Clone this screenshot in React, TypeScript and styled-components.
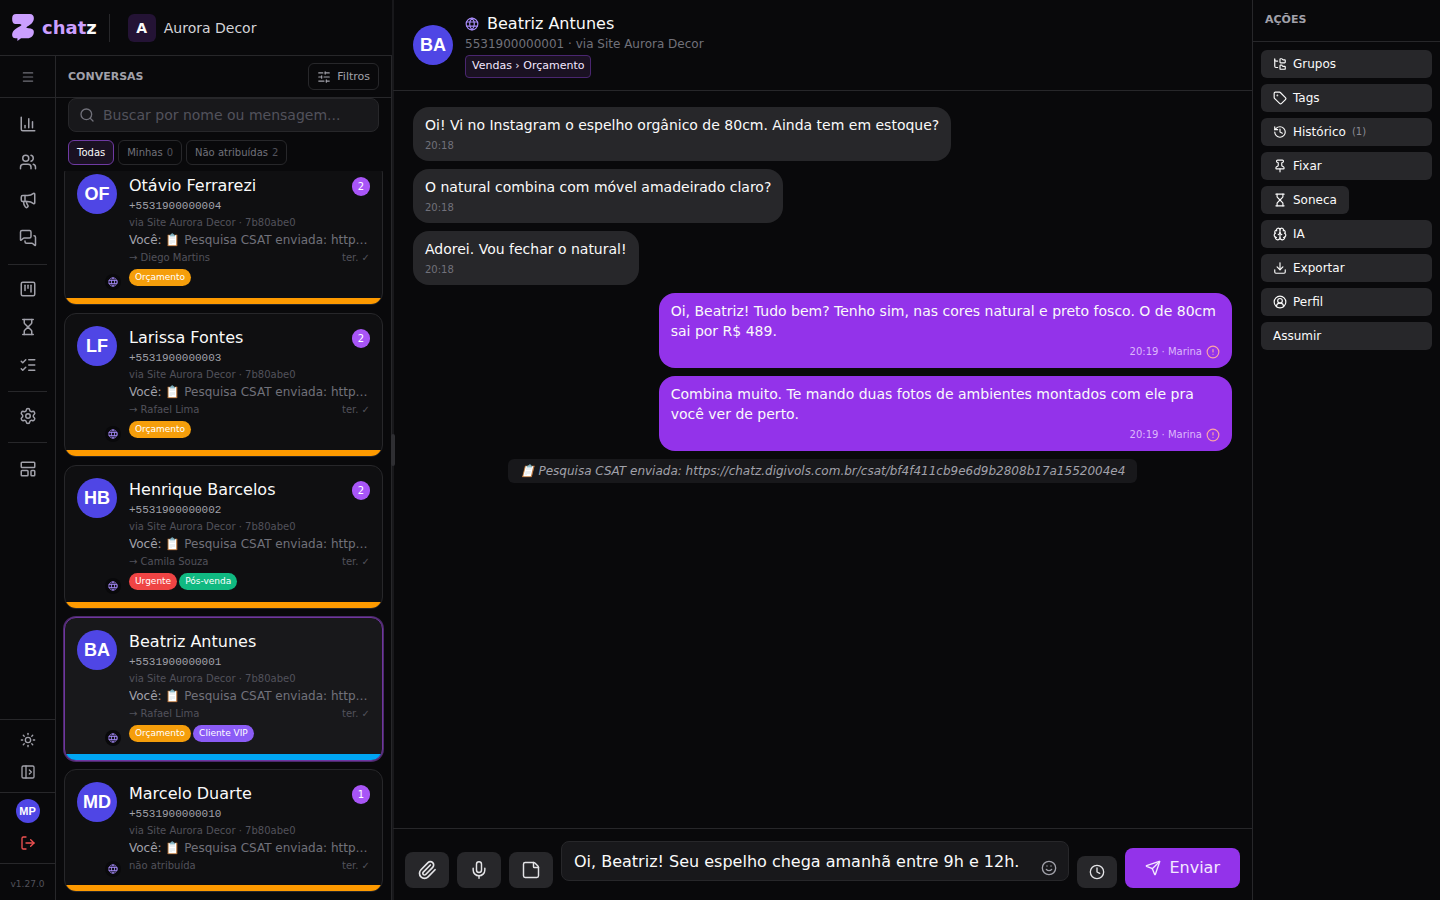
import React, { useLayoutEffect, useRef } from "react";
import styled, { createGlobalStyle, css } from "styled-components";
import {
  Brain, ChartColumn, CircleAlert, CircleUserRound, Clock, Download, FolderTree, History, Hourglass,
  LayoutTemplate, ListChecks, LogOut, Megaphone, Menu, MessagesSquare, Mic, PanelLeftOpen, Paperclip, Pin,
  Search, Send, Settings, SlidersHorizontal, Smile, SquareKanban, StickyNote, Sun, Tag as TagIcon, Users,
} from "lucide-react";
import type { LucideIcon } from "lucide-react";

const c = {
  bg: "#09090b",
  card: "#0f0f11",
  surface: "#18181b",
  raised: "#27272a",
  line: "#27272a",
  text: "#fafafa",
  soft: "#d4d4d8",
  muted: "#a1a1aa",
  dim: "#71717a",
  faint: "#52525b",
  brand: "#9333ea",
  lilac: "#a78bfa",
};

const GlobalStyle = createGlobalStyle`
  *, *::before, *::after { box-sizing: border-box; }
  body { margin: 0; background: ${c.bg}; color: ${c.text}; font: 14px/20px "DejaVu Sans", sans-serif; }
  button, input, textarea { font: inherit; color: inherit; margin: 0; }
  button { cursor: pointer; padding: 0; border: 0; background: none; }
  h1, h2, h3, p, ul { margin: 0; padding: 0; font-size: inherit; }
  ul { list-style: none; }
  svg { display: block; flex: none; }
`;

const Shell = styled.div`
  display: grid;
  grid-template-columns: 392px auto minmax(0, 1fr) 188px;
  height: 100vh;
  overflow: hidden;
`;

/* ---------- left block ---------- */

const Left = styled.div`
  display: flex;
  flex-direction: column;
  min-height: 0;
`;

const Brand = styled.header`
  display: flex;
  align-items: center;
  height: 56px;
  flex: none;
  padding: 0 12px;
  border-bottom: 1px solid ${c.line};
`;

const Wordmark = styled.span`
  margin-left: 8px;
  font-size: 18px;
  font-weight: 700;
  line-height: 28px;
  color: #cb9fff;
  b { color: ${c.text}; }
`;

const Divider = styled.span`
  width: 1px;
  height: 28px;
  margin: 0 18px 0 12px;
  background: ${c.line};
`;

const OrgMark = styled.span`
  display: grid;
  place-items: center;
  width: 28px;
  height: 28px;
  margin-right: 8px;
  border-radius: 6px;
  background: #241335;
  font-weight: 700;
`;

const OrgName = styled.span`
  color: ${c.soft};
`;

const LeftBody = styled.div`
  display: flex;
  flex: 1;
  min-height: 0;
  border-right: 1px solid ${c.line};
`;

const Rail = styled.nav`
  display: flex;
  flex-direction: column;
  width: 56px;
  flex: none;
  border-right: 1px solid ${c.line};
`;

const RailToggle = styled.button`
  display: grid;
  place-items: center;
  height: 42px;
  border-bottom: 1px solid ${c.line};
  color: ${c.dim};
`;

const RailItems = styled.div`
  flex: 1;
  padding: 8px;
`;

const RailLink = styled.a`
  display: grid;
  place-items: center;
  height: 36px;
  margin-bottom: 2px;
  color: ${c.muted};
`;

const RailRule = styled.hr`
  height: 1px;
  margin: 8px 0 6px;
  border: 0;
  background: ${c.line};
`;

const RailExtra = styled.div`
  padding-top: 2px;
`;

const RailFoot = styled.div<{ $pad: string }>`
  display: flex;
  flex-direction: column;
  align-items: center;
  padding: ${(p) => p.$pad};
  border-top: 1px solid ${c.line};
`;

const RailButton = styled.button<{ $danger?: boolean }>`
  display: grid;
  place-items: center;
  width: 40px;
  height: 32px;
  color: ${(p) => (p.$danger ? "#f05252" : c.muted)};
`;

const Version = styled.small`
  font-size: 9px;
  line-height: 14px;
  color: ${c.faint};
`;

const Avatar = styled.span<{ $small?: boolean }>`
  display: grid;
  place-items: center;
  width: ${(p) => (p.$small ? 24 : 40)}px;
  height: ${(p) => (p.$small ? 24 : 40)}px;
  flex: none;
  border-radius: 50%;
  background: #4f46e5;
  color: #fff;
  font: 700 ${(p) => (p.$small ? 11 : 18)}px/20px "Liberation Sans", sans-serif;
`;

/* ---------- conversation list ---------- */

const Inbox = styled.section`
  display: flex;
  flex-direction: column;
  flex: 1;
  min-width: 0;
`;

const InboxHead = styled.div`
  display: flex;
  align-items: center;
  justify-content: space-between;
  height: 42px;
  flex: none;
  padding: 0 12px;
  border-bottom: 1px solid ${c.line};
`;

const Heading = styled.h2`
  font-size: 11px;
  line-height: 15px;
  font-weight: 700;
  color: ${c.muted};
`;

const FilterButton = styled.button`
  display: flex;
  align-items: center;
  gap: 6px;
  height: 27px;
  padding: 0 8px;
  border: 1px solid ${c.line};
  border-radius: 6px;
  font-size: 11px;
  line-height: 15px;
  color: ${c.muted};
`;

const SearchBox = styled.label`
  display: flex;
  align-items: center;
  gap: 8px;
  height: 34px;
  flex: none;
  margin: 0 12px;
  padding: 0 10px;
  border: 1px solid ${c.line};
  border-radius: 8px;
  background: ${c.surface};
  color: ${c.dim};
  input {
    flex: 1;
    min-width: 0;
    padding: 0;
    border: 0;
    outline: 0;
    background: none;
    color: ${c.text};
  }
  input::placeholder { color: ${c.faint}; opacity: 1; }
`;

const Chips = styled.div`
  display: flex;
  gap: 4px;
  padding: 8px 12px 6px;
`;

const Chip = styled.button<{ $on?: boolean }>`
  display: flex;
  gap: 4px;
  align-items: center;
  height: 25px;
  padding: 0 8px;
  border: 1px solid ${(p) => (p.$on ? "#6f3aa3" : c.line)};
  border-radius: 6px;
  background: ${(p) => (p.$on ? "#1a1122" : "none")};
  color: ${(p) => (p.$on ? c.text : c.dim)};
  font-size: 10px;
  line-height: 15px;
  span { color: ${c.faint}; }
`;

const Cards = styled.ul`
  display: flex;
  flex-direction: column;
  gap: 8px;
  flex: 1;
  min-height: 0;
  padding: 0 8px 8px;
  overflow-y: auto;
  scrollbar-width: none;
`;

const Card = styled.li<{ $active?: boolean }>`
  flex: none;
  border: 1px solid ${c.line};
  border-radius: 12px;
  background: ${c.card};
  overflow: hidden;
  ${(p) => p.$active && css`
    border-color: #6f369f;
    background: ${c.surface};
    box-shadow: 0 0 0 1px #4d2a6c;
  `}
`;

const CardBody = styled.div`
  display: flex;
  gap: 12px;
  padding: 12px;
`;

const Portrait = styled.div`
  position: relative;
  flex: none;
`;

const Channel = styled.span`
  position: absolute;
  right: -4px;
  bottom: -4px;
  display: grid;
  place-items: center;
  width: 16px;
  height: 16px;
  border-radius: 50%;
  background: ${c.bg};
  color: ${c.lilac};
`;

const Info = styled.div`
  flex: 1;
  min-width: 0;
`;

const Row = styled.div`
  display: flex;
  align-items: center;
  justify-content: space-between;
`;

const Name = styled.h3`
  font-size: 16px;
  line-height: 24px;
  font-weight: 400;
`;

const Unread = styled.span`
  min-width: 18px;
  height: 19px;
  border-radius: 10px;
  background: #a855f7;
  color: #fff;
  font-size: 10px;
  line-height: 19px;
  text-align: center;
`;

const Phone = styled.p`
  font: 11px/16px "Liberation Mono", monospace;
  color: ${c.muted};
`;

const Source = styled.p`
  font-size: 10px;
  line-height: 17px;
  color: ${c.faint};
`;

const Small = styled.p`
  font-size: 10px;
  line-height: 15px;
  color: ${c.faint};
`;

const Preview = styled.p`
  font-size: 12px;
  line-height: 19px;
  color: ${c.dim};
  white-space: nowrap;
  overflow: hidden;
  text-overflow: ellipsis;
  span { color: ${c.muted}; }
`;

const Labels = styled.div`
  display: flex;
  gap: 2px;
  margin-top: 4px;
`;

const Label = styled.span<{ $tone: string }>`
  height: 17px;
  padding: 0 6px;
  border-radius: 9px;
  background: ${(p) => p.$tone};
  color: #fff;
  font-size: 9px;
  line-height: 17px;
`;

const Stripe = styled.div<{ $active?: boolean }>`
  height: 6px;
  background: ${(p) => (p.$active ? "#00a6f4" : "#fe9a00")};
`;

/* ---------- divider between panes ---------- */

const Resizer = styled.div`
  display: flex;
  align-items: center;
  justify-content: center;
  width: 2px;
  margin-right: -1px;
  background: ${c.surface};
  &::after {
    content: "";
    width: 4px;
    height: 32px;
    flex: none;
    border-radius: 2px;
    background: #2e2e32;
  }
`;

/* ---------- chat ---------- */

const Chat = styled.main`
  display: flex;
  flex-direction: column;
  min-height: 0;
`;

const ChatHead = styled.header`
  display: flex;
  align-items: center;
  gap: 12px;
  padding: 12px 20px;
  border-bottom: 1px solid ${c.line};
`;

const NameRow = styled.div`
  display: flex;
  align-items: center;
  gap: 8px;
  color: ${c.lilac};
  h1 { color: ${c.text}; }
`;

const Sub = styled.p`
  font-size: 12px;
  line-height: 16px;
  color: ${c.dim};
`;

const Stage = styled.span`
  display: inline-block;
  margin-top: 3px;
  height: 23px;
  padding: 0 6px;
  border: 1px solid #4a2670;
  border-radius: 4px;
  background: #1a1122;
  color: #f3e8ff;
  font-size: 11px;
  line-height: 20px;
  vertical-align: top;
`;

const Thread = styled.div`
  display: flex;
  flex-direction: column;
  align-items: flex-start;
  gap: 8px;
  flex: 1;
  min-height: 0;
  padding: 16px 20px;
  overflow: auto;
`;

const Bubble = styled.article<{ $mine?: boolean }>`
  max-width: 70%;
  padding: ${(p) => (p.$mine ? "8px 12px 9px" : "8px 12px")};
  border-radius: 16px;
  align-self: ${(p) => (p.$mine ? "flex-end" : "flex-start")};
  background: ${(p) => (p.$mine ? c.brand : c.raised)};
`;

const Meta = styled.div<{ $mine?: boolean }>`
  display: flex;
  align-items: center;
  justify-content: ${(p) => (p.$mine ? "flex-end" : "flex-start")};
  gap: 4px;
  margin-top: 4px;
  font-size: 10px;
  line-height: 14px;
  color: ${(p) => (p.$mine ? "#dcb8fb" : c.dim)};
  svg { color: #fca5a5; }
`;

const Notice = styled.p`
  align-self: center;
  padding: 4px 12px;
  border-radius: 6px;
  background: ${c.surface};
  color: ${c.muted};
  font-size: 12px;
  line-height: 16px;
  font-style: italic;
`;

const Composer = styled.form`
  display: flex;
  align-items: flex-end;
  gap: 8px;
  padding: 12px;
  border-top: 1px solid ${c.line};
`;

const Tool = styled.button<{ $w?: number; $h?: number }>`
  display: grid;
  place-items: center;
  width: ${(p) => p.$w ?? 44}px;
  height: ${(p) => p.$h ?? 36}px;
  flex: none;
  border-radius: 8px;
  background: ${c.raised};
  color: #e4e4e7;
`;

const Field = styled.div`
  position: relative;
  flex: 1;
  min-width: 0;
  padding-bottom: 7px;
  textarea {
    display: block;
    width: 100%;
    height: 40px;
    padding: 8px 40px 6px 12px;
    border: 1px solid ${c.line};
    border-radius: 8px;
    outline: 0;
    resize: none;
    overflow: hidden;
    background: ${c.surface};
    font-size: 16px;
    line-height: 24px;
  }
`;

const EmojiButton = styled.button`
  position: absolute;
  right: 12px;
  bottom: 12px;
  color: ${c.muted};
`;

const SendButton = styled.button`
  display: flex;
  align-items: center;
  gap: 8px;
  height: 40px;
  padding: 0 20px;
  border-radius: 8px;
  background: ${c.brand};
  color: #f3e8ff;
  font-size: 16px;
  line-height: 24px;
`;

/* ---------- actions ---------- */

const Actions = styled.aside`
  border-left: 1px solid ${c.line};
`;

const ActionsHead = styled.div`
  height: 42px;
  padding: 12px;
  border-bottom: 1px solid ${c.line};
`;

const ActionList = styled.div`
  display: flex;
  flex-direction: column;
  gap: 6px;
  padding: 8px;
`;

const Action = styled.button<{ $fit?: boolean }>`
  display: flex;
  align-items: center;
  gap: 6px;
  height: 28px;
  padding: 0 12px;
  border-radius: 6px;
  align-self: ${(p) => (p.$fit ? "flex-start" : "stretch")};
  background: ${c.raised};
  font-size: 12px;
  line-height: 16px;
  color: ${c.text};
  small { font-size: 10px; color: #8b8b94; }
`;

const Globe = ({ size }: { size: number }) => (
  <svg width={size} height={size} viewBox="0 0 24 24" fill="none" stroke="currentColor" strokeWidth="2" strokeLinecap="round" aria-hidden="true">
    <circle cx="12" cy="12" r="10" />
    <path d="M2.6 8.5h18.8M2.6 15.5h18.8M12 2c-5.3 5.6-5.3 14.4 0 20M12 2c5.3 5.6 5.3 14.4 0 20" />
  </svg>
);

const Logo = () => (
  <svg width="22" height="27" viewBox="0 0 66 82" aria-hidden="true">
    <path
      fill="#cb9fff"
      d="M12 0H54C62 0 66 6 66 12C66 24 58 31 46 38C41 41 43 43 50 43C60 43 66 47 66 54C66 66 58 74 46 74H27L16 82V74H10C4 74 0 70 0 64C0 52 8 46 24 37C31 33 29 30 20 30H9C2 30 0 24 0 14C0 4 4 0 12 0Z"
    />
  </svg>
);

type Tone = "amber" | "red" | "green" | "violet";
const tones: Record<Tone, string> = { amber: "#f59e0b", red: "#ef4444", green: "#10b981", violet: "#8b5cf6" };

type Conversation = {
  initials: string;
  name: string;
  phone: string;
  owner: string;
  unread?: number;
  active?: boolean;
  tags: [string, Tone][];
};

const conversations: Conversation[] = [
  { initials: "OF", name: "Otávio Ferrarezi", phone: "+5531900000004", owner: "→ Diego Martins", unread: 2, tags: [["Orçamento", "amber"]] },
  { initials: "LF", name: "Larissa Fontes", phone: "+5531900000003", owner: "→ Rafael Lima", unread: 2, tags: [["Orçamento", "amber"]] },
  { initials: "HB", name: "Henrique Barcelos", phone: "+5531900000002", owner: "→ Camila Souza", unread: 2, tags: [["Urgente", "red"], ["Pós-venda", "green"]] },
  { initials: "BA", name: "Beatriz Antunes", phone: "+5531900000001", owner: "→ Rafael Lima", active: true, tags: [["Orçamento", "amber"], ["Cliente VIP", "violet"]] },
  { initials: "MD", name: "Marcelo Duarte", phone: "+5531900000010", owner: "não atribuída", unread: 1, tags: [] },
];

const railGroups: [string, LucideIcon][][] = [
  [["Relatórios", ChartColumn], ["Contatos", Users], ["Campanhas", Megaphone], ["Conversas", MessagesSquare]],
  [["Quadro", SquareKanban], ["Sonecas", Hourglass], ["Tarefas", ListChecks]],
  [["Configurações", Settings]],
];

const messages: { text: string; time: string; author?: string }[] = [
  { text: "Oi! Vi no Instagram o espelho orgânico de 80cm. Ainda tem em estoque?", time: "20:18" },
  { text: "O natural combina com móvel amadeirado claro?", time: "20:18" },
  { text: "Adorei. Vou fechar o natural!", time: "20:18" },
  { text: "Oi, Beatriz! Tudo bem? Tenho sim, nas cores natural e preto fosco. O de 80cm sai por R$ 489.", time: "20:19", author: "Marina" },
  { text: "Combina muito. Te mando duas fotos de ambientes montados com ele pra você ver de perto.", time: "20:19", author: "Marina" },
];

const actions: { label: string; icon?: LucideIcon; count?: string; fit?: boolean }[] = [
  { label: "Grupos", icon: FolderTree },
  { label: "Tags", icon: TagIcon },
  { label: "Histórico", icon: History, count: "(1)" },
  { label: "Fixar", icon: Pin },
  { label: "Soneca", icon: Hourglass, fit: true },
  { label: "IA", icon: Brain },
  { label: "Exportar", icon: Download },
  { label: "Perfil", icon: CircleUserRound },
  { label: "Assumir" },
];

function ConversationCard({ item }: { item: Conversation }) {
  return (
    <Card $active={item.active}>
      <CardBody>
        <Portrait>
          <Avatar>{item.initials}</Avatar>
          <Channel><Globe size={10} /></Channel>
        </Portrait>
        <Info>
          <Row>
            <Name>{item.name}</Name>
            {item.unread && <Unread>{item.unread}</Unread>}
          </Row>
          <Phone>{item.phone}</Phone>
          <Source>via Site Aurora Decor · 7b80abe0</Source>
          <Preview><span>Você: </span>📋 Pesquisa CSAT enviada: https://chatz.digivols.com.br/csat</Preview>
          <Row>
            <Small>{item.owner}</Small>
            <Small>ter. ✓</Small>
          </Row>
          {item.tags.length > 0 && (
            <Labels>
              {item.tags.map(([text, tone]) => <Label key={text} $tone={tones[tone]}>{text}</Label>)}
            </Labels>
          )}
        </Info>
      </CardBody>
      <Stripe $active={item.active} />
    </Card>
  );
}

export default function App() {
  const list = useRef<HTMLUListElement>(null);

  useLayoutEffect(() => {
    if (list.current) list.current.scrollTop = list.current.scrollHeight;
  }, []);

  return (
    <>
      <GlobalStyle />
      <Shell>
        <Left>
          <Brand>
            <Logo />
            <Wordmark>chat<b>z</b></Wordmark>
            <Divider />
            <OrgMark>A</OrgMark>
            <OrgName>Aurora Decor</OrgName>
          </Brand>
          <LeftBody>
            <Rail aria-label="Principal">
              <RailToggle aria-label="Menu"><Menu size={14} /></RailToggle>
              <RailItems>
                {railGroups.map((group, i) => (
                  <React.Fragment key={i}>
                    {group.map(([label, Icon]) => (
                      <RailLink key={label} href="#" aria-label={label}><Icon size={18} /></RailLink>
                    ))}
                    <RailRule />
                  </React.Fragment>
                ))}
                <RailExtra>
                  <RailLink href="#" aria-label="Modelos"><LayoutTemplate size={18} /></RailLink>
                </RailExtra>
              </RailItems>
              <RailFoot $pad="4px 0">
                <RailButton aria-label="Tema"><Sun size={16} /></RailButton>
                <RailButton aria-label="Expandir menu"><PanelLeftOpen size={16} /></RailButton>
              </RailFoot>
              <RailFoot $pad="2px 0 4px">
                <RailButton aria-label="Minha conta"><Avatar $small>MP</Avatar></RailButton>
                <RailButton $danger aria-label="Sair"><LogOut size={16} /></RailButton>
              </RailFoot>
              <RailFoot $pad="13px 0 9px">
                <Version>v1.27.0</Version>
              </RailFoot>
            </Rail>
            <Inbox>
              <InboxHead>
                <Heading>CONVERSAS</Heading>
                <FilterButton><SlidersHorizontal size={14} />Filtros</FilterButton>
              </InboxHead>
              <SearchBox>
                <Search size={16} />
                <input type="search" aria-label="Buscar conversas" placeholder="Buscar por nome ou mensagem..." />
              </SearchBox>
              <Chips>
                <Chip $on>Todas</Chip>
                <Chip>Minhas <span>0</span></Chip>
                <Chip>Não atribuídas <span>2</span></Chip>
              </Chips>
              <Cards ref={list}>
                {conversations.map((item) => <ConversationCard key={item.phone} item={item} />)}
              </Cards>
            </Inbox>
          </LeftBody>
        </Left>

        <Resizer role="separator" aria-orientation="vertical" />

        <Chat>
          <ChatHead>
            <Avatar>BA</Avatar>
            <div>
              <NameRow><Globe size={14} /><Name as="h1">Beatriz Antunes</Name></NameRow>
              <Sub>5531900000001 · via Site Aurora Decor</Sub>
              <Stage>Vendas › Orçamento</Stage>
            </div>
          </ChatHead>
          <Thread>
            {messages.map((m) => (
              <Bubble key={m.text} $mine={!!m.author}>
                <p>{m.text}</p>
                <Meta $mine={!!m.author}>
                  {m.author ? `${m.time} · ${m.author}` : m.time}
                  {m.author && <CircleAlert size={14} />}
                </Meta>
              </Bubble>
            ))}
            <Notice>📋 Pesquisa CSAT enviada: https://chatz.digivols.com.br/csat/bf4f411cb9e6d9b2808b17a1552004e4</Notice>
          </Thread>
          <Composer onSubmit={(e) => e.preventDefault()}>
            <Tool type="button" aria-label="Anexar"><Paperclip size={20} /></Tool>
            <Tool type="button" aria-label="Gravar áudio"><Mic size={20} strokeWidth={1.75} /></Tool>
            <Tool type="button" aria-label="Nota"><StickyNote size={20} strokeWidth={1.75} /></Tool>
            <Field>
              <textarea aria-label="Mensagem" rows={1} defaultValue="Oi, Beatriz! Seu espelho chega amanhã entre 9h e 12h." />
              <EmojiButton type="button" aria-label="Emoji"><Smile size={16} /></EmojiButton>
            </Field>
            <Tool type="button" $w={40} $h={32} aria-label="Agendar"><Clock size={16} /></Tool>
            <SendButton type="submit"><Send size={16} />Enviar</SendButton>
          </Composer>
        </Chat>

        <Actions>
          <ActionsHead><Heading>AÇÕES</Heading></ActionsHead>
          <ActionList>
            {actions.map(({ label, icon: Icon, count, fit }) => (
              <Action key={label} $fit={fit}>
                {Icon && <Icon size={14} />}
                {label}
                {count && <small>{count}</small>}
              </Action>
            ))}
          </ActionList>
        </Actions>
      </Shell>
    </>
  );
}
